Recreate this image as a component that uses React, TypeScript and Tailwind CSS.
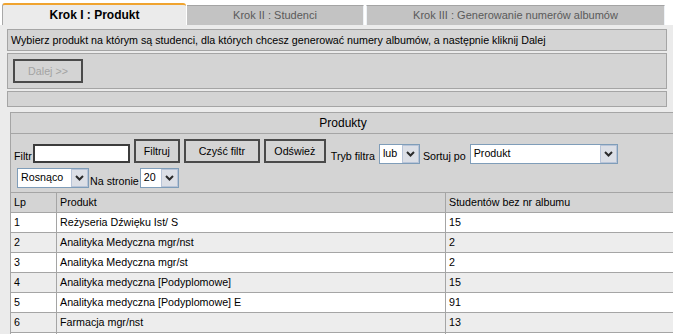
import React from "react";

type Row = { lp: string; name: string; count: string };

const rows: Row[] = [
  { lp: "1", name: "Reżyseria Dźwięku Ist/ S", count: "15" },
  { lp: "2", name: "Analityka Medyczna mgr/nst", count: "2" },
  { lp: "3", name: "Analityka Medyczna mgr/st", count: "2" },
  { lp: "4", name: "Analityka medyczna [Podyplomowe]", count: "15" },
  { lp: "5", name: "Analityka medyczna [Podyplomowe] E", count: "91" },
  { lp: "6", name: "Farmacja mgr/nst", count: "13" },
  { lp: "", name: "", count: "" },
];

const Chevron = () => (
  <svg width="9" height="6" viewBox="0 0 9 6">
    <path d="M1 1 L4.5 4.5 L8 1" stroke="#2b2b2b" strokeWidth="2" fill="none" />
  </svg>
);

// fake select box, native ones render differently in every browser
const Select = ({ value, className }: { value: string; className: string }) => (
  <div className={"flex border border-[#7f9db9] bg-white " + className}>
    <div className="flex-1 pl-[3px] leading-[17px] whitespace-nowrap overflow-hidden">{value}</div>
    <div className="w-[17px] flex items-center justify-center border border-[#b8c4d8] bg-[#dcdfe6]">
      <Chevron />
    </div>
  </div>
);

const Button = ({ label, className }: { label: string; className: string }) => (
  <div
    className={
      "h-[24px] flex items-center justify-center border-2 border-[#4a4a4a] bg-[#d4d4d4] " + className
    }
  >
    {label}
  </div>
);

export default function App() {
  return (
    <div className="w-[673px] h-[334px] overflow-hidden bg-white text-[10.7px] text-black font-['Liberation_Sans',Arial,sans-serif]">
      {/* tabs */}
      <div className="flex items-end h-[25px] pl-[2px]">
        <div className="w-[184px] h-[22px] flex items-center justify-center bg-[#ebebeb] border-t-2 border-l border-t-[#f0a430] border-l-[#a8a8a8] rounded-tl-[3px] rounded-tr-[3px] font-bold text-[12px]">
          Krok I : Produkt
        </div>
        <div className="w-[177px] h-[20px] ml-[1px] flex items-center justify-center bg-[#c3c3c3] border-t border-r border-t-[#a4a4a4] border-r-[#eef2f6] text-[#5a5a5a] text-[11px]">
          Krok II : Studenci
        </div>
        <div className="w-[299px] h-[20px] ml-[2px] flex items-center justify-center bg-[#c3c3c3] border-t border-l border-r border-t-[#a4a4a4] border-l-[#eef2f6] border-r-[#eef2f6] text-[#5a5a5a] text-[11px]">
          Krok III : Generowanie numerów albumów
        </div>
      </div>

      {/* content */}
      <div className="h-[309px] bg-[#ebebeb] pt-[4px]">
        <div className="ml-[7px] w-[660px] h-[22px] flex items-center px-[3px] bg-[#d4d4d4] border border-[#a5a5a5]">
          Wybierz produkt na którym są studenci, dla których chcesz generować numery albumów, a następnie kliknij Dalej
        </div>
        <div className="ml-[7px] mt-[2px] w-[660px] h-[36px] pl-[5px] pt-[5px] bg-[#d4d4d4] border border-[#a5a5a5]">
          <div className="w-[70px] h-[24px] flex items-center justify-center border-2 border-[#4a4a4a] text-[#a3a3a3]">
            Dalej &gt;&gt;
          </div>
        </div>
        <div className="ml-[7px] mt-[2px] w-[660px] h-[16px] bg-[#d4d4d4] border border-[#a5a5a5]" />

        {/* products panel */}
        <div className="ml-[10px] mt-[5px] w-[666px] border border-[#a5a5a5] bg-[#d4d4d4]">
          <div className="h-[21px] flex items-center justify-center border-b border-[#a5a5a5] text-[12px]">
            Produkty
          </div>
          <div className="h-[59px] border-b border-[#a5a5a5] pl-[3px] pt-[5px]">
            <div className="flex items-end h-[24px]">
              <span className="leading-[14px]">Filtr</span>
              <div className="ml-[1px] w-[97px] h-[19px] bg-white border-2 border-[#3c3c3c]" />
              <Button label="Filtruj" className="ml-[4px] w-[46px]" />
              <Button label="Czyść filtr" className="ml-[4px] w-[76px]" />
              <Button label="Odśwież" className="ml-[4px] w-[62px]" />
              <span className="ml-[5px] leading-[14px]">Tryb filtra</span>
              <Select value="lub" className="ml-[4px] w-[41px] h-[20px] mb-[-1px]" />
              <span className="ml-[3px] leading-[14px]">Sortuj po</span>
              <Select value="Produkt" className="ml-[4px] w-[148px] h-[20px] mb-[-1px]" />
            </div>
            <div className="flex items-end h-[20px] mt-[5px] pl-[3px]">
              <Select value="Rosnąco" className="w-[72px] h-[20px]" />
              <span className="ml-[1px] leading-[14px]">Na stronie</span>
              <Select value="20" className="ml-[1px] w-[39px] h-[20px]" />
            </div>
          </div>

          {/* table */}
          <div className="flex h-[20px] border-b border-[#a5a5a5]">
            <div className="w-[46px] border-r border-[#a5a5a5] pl-[3px] leading-[19px]">Lp</div>
            <div className="w-[389px] border-r border-[#a5a5a5] pl-[3px] leading-[19px]">Produkt</div>
            <div className="flex-1 pl-[3px] leading-[19px]">Studentów bez nr albumu</div>
          </div>
          {rows.map((r, i) => (
            <div
              key={i}
              className={"flex h-[20px] border-b border-[#a5a5a5] " + (i % 2 === 0 ? "bg-white" : "bg-[#ededed]")}
            >
              <div className="w-[46px] border-r border-[#a5a5a5] pl-[3px] leading-[19px]">{r.lp}</div>
              <div className="w-[389px] border-r border-[#a5a5a5] pl-[3px] leading-[19px]">{r.name}</div>
              <div className="flex-1 pl-[3px] leading-[19px]">{r.count}</div>
            </div>
          ))}
        </div>
      </div>
    </div>
  );
}
